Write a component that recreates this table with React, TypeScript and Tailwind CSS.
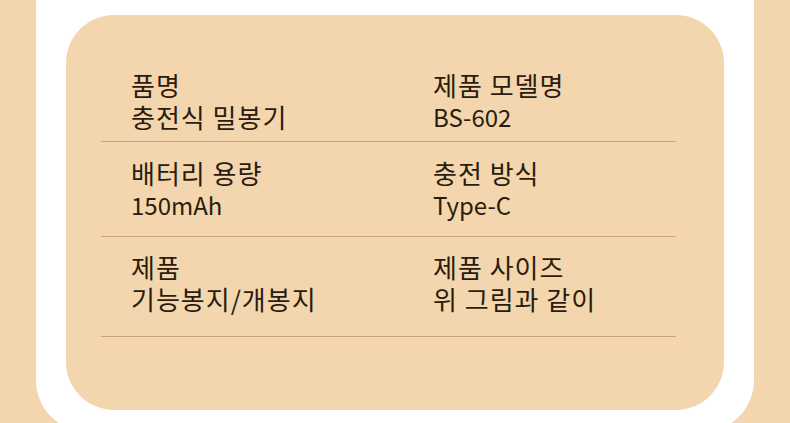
import React from "react";

type Cell = { label: string; value: string; latin?: boolean };

const rows: Cell[][] = [
  [
    { label: "품명", value: "충전식 밀봉기" },
    { label: "제품 모델명", value: "BS-602", latin: true },
  ],
  [
    { label: "배터리 용량", value: "150mAh", latin: true },
    { label: "충전 방식", value: "Type-C", latin: true },
  ],
  [
    { label: "제품", value: "기능봉지/개봉지" },
    { label: "제품 사이즈", value: "위 그림과 같이" },
  ],
];

const rowPad = ["pt-[54px] pb-[8px]", "pt-[15px] pb-[15px]", "pt-[14px] pb-[21px]"];

export default function App() {
  return (
    <div
      className="w-[790px] h-[423px] overflow-hidden bg-[#f3d6ad] px-[36px]"
      style={{ fontFamily: '"Noto Sans CJK KR", "Noto Sans", sans-serif' }}
    >
      <div className="bg-white h-[432px] rounded-b-[52px] px-[30px] pt-[15px]">
        <div className="bg-[#f3d6ad] h-[395px] rounded-[48px] pl-[35px] pr-[48px]">
          {rows.map((row, i) => (
            <div key={i} className={`border-b border-[#c6a47d] ${rowPad[i]}`}>
              <div className="grid grid-cols-[302px_1fr] pl-[30px] leading-[32px] text-[#2a1c0f]">
                {row.map((c, j) => (
                  <div key={j} className="flex flex-col">
                    <span className="text-[26px] tracking-[1px]">{c.label}</span>
                    {c.latin ? (
                      <span className="text-[24px]">{c.value}</span>
                    ) : (
                      <span className="text-[26px] tracking-[1px]">{c.value}</span>
                    )}
                  </div>
                ))}
              </div>
            </div>
          ))}
        </div>
      </div>
    </div>
  );
}
